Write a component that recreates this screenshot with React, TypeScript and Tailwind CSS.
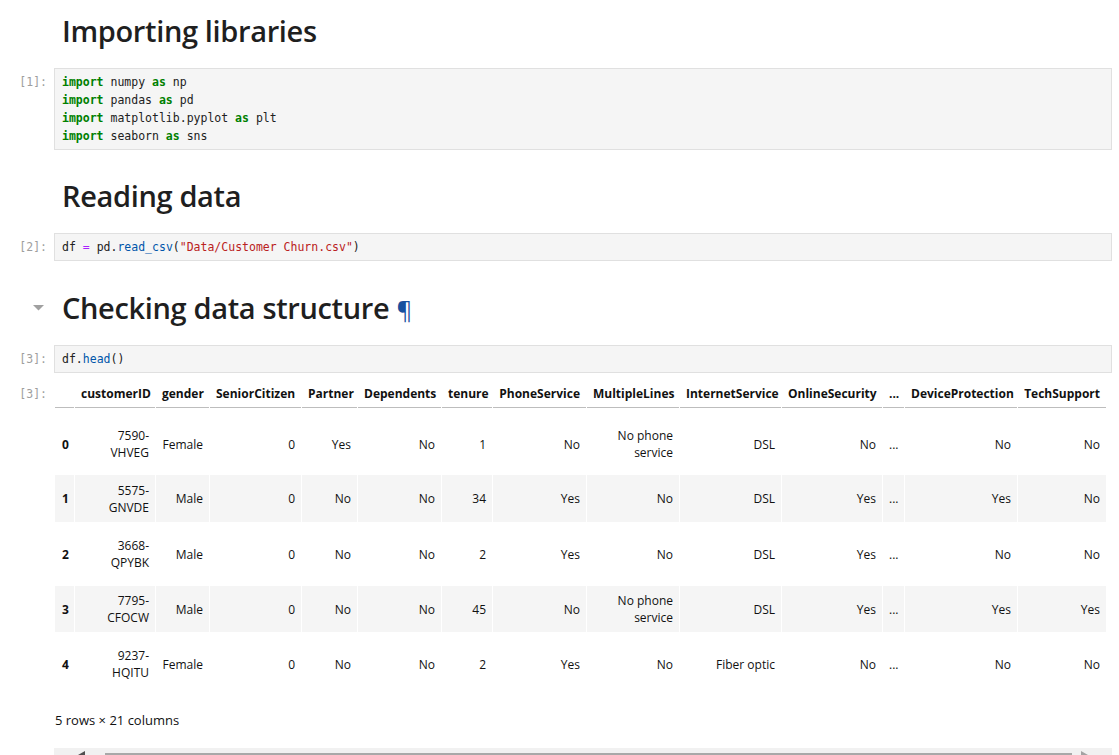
import React from 'react';

const mono = { fontFamily: '"DejaVu Sans Mono", "Liberation Mono", monospace' };

const columns = [
  { name: '', w: 19 },
  { name: 'customerID', w: 80 },
  { name: 'gender', w: 53 },
  { name: 'SeniorCitizen', w: 91 },
  { name: 'Partner', w: 55 },
  { name: 'Dependents', w: 83 },
  { name: 'tenure', w: 50 },
  { name: 'PhoneService', w: 93 },
  { name: 'MultipleLines', w: 92 },
  { name: 'InternetService', w: 101 },
  { name: 'OnlineSecurity', w: 100 },
  { name: '...', w: 21 },
  { name: 'DeviceProtection', w: 112 },
  { name: 'TechSupport', w: 88 },
];

const rows = [
  ['0', '7590-|VHVEG', 'Female', '0', 'Yes', 'No', '1', 'No', 'No phone|service', 'DSL', 'No', '...', 'No', 'No'],
  ['1', '5575-|GNVDE', 'Male', '0', 'No', 'No', '34', 'Yes', 'No', 'DSL', 'Yes', '...', 'Yes', 'No'],
  ['2', '3668-|QPYBK', 'Male', '0', 'No', 'No', '2', 'Yes', 'No', 'DSL', 'Yes', '...', 'No', 'No'],
  ['3', '7795-|CFOCW', 'Male', '0', 'No', 'No', '45', 'No', 'No phone|service', 'DSL', 'Yes', '...', 'Yes', 'Yes'],
  ['4', '9237-|HQITU', 'Female', '0', 'No', 'No', '2', 'Yes', 'No', 'Fiber optic', 'No', '...', 'No', 'No'],
];

const rowHeights = ['h-[67px] pt-[5px]', 'h-[47px]', 'h-[64px]', 'h-[46px]', 'h-[64px]'];

function Prompt({ n }: { n: number }) {
  return (
    <div className="w-[54px] shrink-0 pr-[7px] text-right text-[11.5px] leading-[18px] text-[#9e9e9e]" style={mono}>
      [{n}]:
    </div>
  );
}

function Kw({ children }: { children: React.ReactNode }) {
  return <span className="font-bold text-[#008000]">{children}</span>;
}

function CodeCell({ n, children }: { n: number; children: React.ReactNode }) {
  return (
    <div className="flex">
      <div className="pt-[5px]"><Prompt n={n} /></div>
      <div
        className="flex-1 border border-[#e0e0e0] bg-[#f5f5f5] px-[7px] py-[4px] text-[11.5px] leading-[18px] text-[#212121]"
        style={mono}
      >
        {children}
      </div>
    </div>
  );
}

function Heading({ children, className, collapse }: { children: React.ReactNode; className: string; collapse?: boolean }) {
  return (
    <div className={`relative flex h-[40px] ${className}`}>
      <div className="w-[54px] shrink-0 flex justify-end items-center pr-[10px]">
        {collapse && (
          <svg width="11" height="6" viewBox="0 0 11 6">
            <polygon points="0,0 11,0 5.5,5.5" fill="#a0a0a0" />
          </svg>
        )}
      </div>
      <h2 className="pl-[8px] text-[29px] leading-[40px] font-semibold text-[#1f1f1f] tracking-[-0.35px]">{children}</h2>
    </div>
  );
}

function Cell({ text }: { text: string }) {
  const parts = text.split('|');
  return (
    <>
      {parts.map((p, i) => (
        <React.Fragment key={i}>
          {i > 0 && <br />}
          {p}
        </React.Fragment>
      ))}
    </>
  );
}

export default function App() {
  return (
    <div className="min-h-screen bg-white pr-[7px]" style={{ fontFamily: '"Open Sans", "Noto Sans", sans-serif' }}>
      <Heading className="mt-[11px] mb-[17px]">Importing libraries</Heading>

      <CodeCell n={1}>
        <div><Kw>import</Kw> numpy <Kw>as</Kw> np</div>
        <div><Kw>import</Kw> pandas <Kw>as</Kw> pd</div>
        <div><Kw>import</Kw> matplotlib.pyplot <Kw>as</Kw> plt</div>
        <div><Kw>import</Kw> seaborn <Kw>as</Kw> sns</div>
      </CodeCell>

      <Heading className="mt-[26px] mb-[17px]">Reading data</Heading>

      <CodeCell n={2}>
        <div>
          df <span className="text-[#aa22ff]">=</span> pd.<span className="text-[#0055aa]">read_csv</span>(
          <span className="text-[#ba2121]">"Data/Customer Churn.csv"</span>)
        </div>
      </CodeCell>

      <Heading className="mt-[27px] mb-[17px]" collapse>
        Checking data structure <span className="text-[24px] leading-none text-[#17509e] font-normal">¶</span>
      </Heading>

      <CodeCell n={3}>
        <div>
          df.<span className="text-[#0055aa]">head</span>()
        </div>
      </CodeCell>

      <div className="flex mt-[7px]">
        <div className="pt-[5px]"><Prompt n={3} /></div>
        <div className="flex-1 min-w-0 overflow-hidden">
          <table
            className="border-separate border-spacing-x-[1px] border-spacing-y-0 table-fixed text-[12px] leading-[17px] text-[#111]"
            style={{ width: columns.reduce((s, c) => s + c.w + 1, 1) }}
          >
            <colgroup>
              {columns.map((c, i) => (
                <col key={i} style={{ width: c.w }} />
              ))}
            </colgroup>
            <thead>
              <tr>
                {columns.map((c, i) => (
                  <th
                    key={i}
                    className={`h-[28px] border-b border-[#bdbdbd] px-[6px] font-bold whitespace-nowrap align-middle ${c.name === '...' ? 'text-left' : 'text-right'}`}
                  >
                    {c.name}
                  </th>
                ))}
              </tr>
            </thead>
            <tbody>
              {rows.map((r, ri) => (
                <tr key={ri} className={ri % 2 === 1 ? 'bg-[#f5f5f5]' : ''}>
                  {r.map((v, ci) =>
                    ci === 0 ? (
                      <th key={ci} className={`${rowHeights[ri]} pl-[7px] text-left font-bold align-middle`}>
                        {v}
                      </th>
                    ) : (
                      <td
                        key={ci}
                        className={`${rowHeights[ri]} px-[6px] whitespace-nowrap align-middle ${v === '...' ? 'text-left' : 'text-right'}`}
                      >
                        <Cell text={v} />
                      </td>
                    )
                  )}
                </tr>
              ))}
            </tbody>
          </table>
          <p className="mt-[15px] pl-[1px] text-[13px] leading-[18px] text-[#111]">5 rows × 21 columns</p>
          <div className="relative mt-[19px] h-[15px] bg-[#f1f1f1]">
            <svg className="absolute left-[24px] top-[3px]" width="7" height="8" viewBox="0 0 7 8">
              <polygon points="0,4 7,0 7,8" fill="#505050" />
            </svg>
            <div className="absolute left-[51px] right-[40px] top-[5px] h-[8px] bg-[#a8a8a8]" />
            <svg className="absolute right-[24px] top-[3px]" width="7" height="8" viewBox="0 0 7 8">
              <polygon points="7,4 0,0 0,8" fill="#a3a3a3" />
            </svg>
          </div>
        </div>
      </div>
    </div>
  );
}
